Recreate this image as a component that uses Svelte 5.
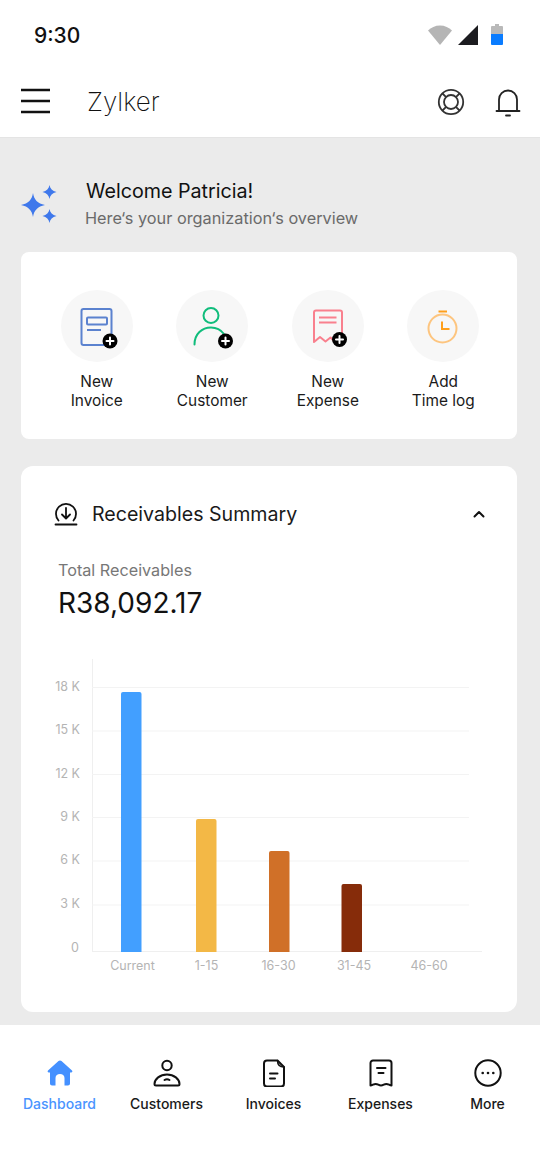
<script>
	const actions = [
		{ id: 'invoice', lines: ['New', 'Invoice'] },
		{ id: 'customer', lines: ['New', 'Customer'] },
		{ id: 'expense', lines: ['New', 'Expense'] },
		{ id: 'time', lines: ['Add', 'Time log'] }
	];

	const ticks = [
		{ label: '18 K', y: 687.5 },
		{ label: '15 K', y: 731 },
		{ label: '12 K', y: 774.5 },
		{ label: '9 K', y: 817.5 },
		{ label: '6 K', y: 861 },
		{ label: '3 K', y: 905 }
	];

	const bars = [
		{ label: 'Current', x: 121, top: 692, color: '#429fff', tx: 132.5 },
		{ label: '1-15', x: 196, top: 819, color: '#f3b846', tx: 206.5 },
		{ label: '16-30', x: 269, top: 851, color: '#d07028', tx: 278.5 },
		{ label: '31-45', x: 341.5, top: 884, color: '#862c0a', tx: 354 },
		{ label: '46-60', x: 0, top: 0, color: '', tx: 429 }
	];

	const tabs = [
		{ id: 'dashboard', label: 'Dashboard' },
		{ id: 'customers', label: 'Customers' },
		{ id: 'invoices', label: 'Invoices' },
		{ id: 'expenses', label: 'Expenses' },
		{ id: 'more', label: 'More' }
	];
</script>

{#snippet plus(cx, cy)}
	<circle cx={cx} cy={cy} r="7.5" fill="#000" />
	<path d="M{cx - 3.5} {cy}h7M{cx} {cy - 3.5}v7" stroke="#fff" stroke-width="2" stroke-linecap="round" fill="none" />
{/snippet}

<div class="page">
	<div class="status">
		<span class="time">9:30</span>
		<div class="status-icons">
			<svg width="26" height="22" viewBox="0 0 26 22"><path d="M1 6.500C4 3.500 8.200 1.500 13 1.500s9 2 12 5L13 21z" fill="#b5b5b5" /></svg>
			<svg width="22" height="22" viewBox="0 0 22 22"><path d="M21 1v20H1z" fill="#1c1c20" /></svg>
			<svg width="12" height="22" viewBox="0 0 12 22"><path d="M4 0h4v2h3a1 1 0 0 1 1 1v7H0V3a1 1 0 0 1 1-1h3z" fill="#b9b9b9" /><path d="M0 10h12v10a1 1 0 0 1-1 1H1a1 1 0 0 1-1-1z" fill="#0a7cff" /></svg>
		</div>
	</div>

	<header class="topbar">
		<svg class="burger" width="30" height="26" viewBox="0 0 30 26"><path d="M0 2h29M0 13h29M0 24h29" stroke="#111" stroke-width="2.400" fill="none" /></svg>
		<span class="brand">Zylker</span>
		<div class="top-actions">
			<svg width="28" height="28" viewBox="0 0 28 28" fill="none" stroke="#333" stroke-width="1.800">
				<circle cx="14" cy="14" r="12.200" />
				<circle cx="14" cy="14" r="7" />
				<path d="M5.500 5.500l3.600 3.600M22.500 5.500l-3.600 3.600M5.500 22.500l3.600-3.600M22.500 22.500l-3.600-3.600" />
			</svg>
			<svg width="26" height="30" viewBox="0 0 26 30" fill="none" stroke="#222" stroke-width="1.800" stroke-linecap="round">
				<path d="M4 23V12.500a9 9 0 0 1 18 0V23M1.500 24h23" />
				<path d="M11 28.500h4" />
			</svg>
		</div>
	</header>

	<main class="content">
		<section class="welcome">
			<svg width="36" height="40" viewBox="0 0 36 40" fill="#3f78eb">
				<path d="M12 8c1 6.500 4.500 10.500 12 12-7.500 1.500-11 5.500-12 12-1-6.500-4.500-10.500-12-12 7.500-1.500 11-5.500 12-12z" />
				<path d="M28.500 0c.6 3.800 2.800 6.100 7 7-4.200.9-6.400 3.200-7 7-.6-3.800-2.800-6.100-7-7 4.200-.9 6.400-3.200 7-7z" />
				<path d="M28.500 24c.6 3.800 2.800 6.100 7 7-4.200.9-6.400 3.200-7 7-.6-3.800-2.800-6.100-7-7 4.200-.9 6.400-3.200 7-7z" />
			</svg>
			<div class="welcome-text">
				<h1>Welcome Patricia!</h1>
				<p>Here‘s your organization‘s overview</p>
			</div>
		</section>

		<section class="card actions">
			{#each actions as action}
				<div class="action">
					<div class="bubble">
						<svg width="72" height="72" viewBox="0 0 72 72" fill="none" stroke-width="2">
							{#if action.id === 'invoice'}
								<rect x="20.500" y="19" width="30" height="36" rx="2" stroke="#5b82cf" />
								<rect x="26" y="27.500" width="20" height="7" rx="1" stroke="#5b82cf" />
								<path d="M26 40h14" stroke="#5b82cf" />
								{@render plus(49, 51)}
							{:else if action.id === 'customer'}
								<circle cx="35" cy="25.500" r="7.500" stroke="#10bd7c" />
								<path d="M18.500 54.500C18.500 44 26 37.500 35 37.500c6 0 10 2.500 13 6.500" stroke="#10bd7c" stroke-linecap="round" />
								{@render plus(49.500, 51)}
							{:else if action.id === 'expense'}
								<path d="M22 52V22.500a2 2 0 0 1 2-2h24a2 2 0 0 1 2 2V45M22 52l6-5 5.500 4.500 5-4 3 3" stroke="#f9808e" stroke-linecap="round" stroke-linejoin="round" />
								<path d="M27 27.500h17.500M27 32.500h17.500" stroke="#f9808e" />
								{@render plus(47.500, 49.500)}
							{:else}
								<circle cx="35.500" cy="38.500" r="14" stroke="#fdc57f" />
								<path d="M31.500 21.500h8.500" stroke="#ff9f1a" />
								<path d="M35 31.500v7.500h7.500" stroke="#ff9f1a" />
							{/if}
						</svg>
					</div>
					<div class="action-label">{action.lines[0]}<br />{action.lines[1]}</div>
				</div>
			{/each}
		</section>

		<section class="card summary">
			<div class="summary-head">
				<svg width="24" height="24" viewBox="0 0 24 24" fill="none" stroke="#111" stroke-width="1.800" stroke-linecap="round" stroke-linejoin="round">
					<path d="M4.500 18.500a10 10 0 1 1 15 0" />
					<path d="M1.500 22.500h21" />
					<path d="M12 6v10M8 12.500l4 4 4-4" />
				</svg>
				<h2>Receivables Summary</h2>
				<svg class="chev" width="14" height="10" viewBox="0 0 14 10" fill="none" stroke="#111" stroke-width="2" stroke-linecap="round" stroke-linejoin="round"><path d="M2.500 7.500L7 3l4.500 4.500" /></svg>
			</div>
			<div class="total-label">Total Receivables</div>
			<div class="total">R38,092.17</div>
			<svg class="chart" width="496" height="330" viewBox="21 650 496 330">
				<path d="M92.500 659V952M92 951.500H482" stroke="#efefef" fill="none" />
				{#each ticks as t}
					<line x1="92" x2="469" y1={t.y} y2={t.y} stroke="#f3f3f3" />
					<text x="80" y={t.y + 3} text-anchor="end">{t.label}</text>
				{/each}
				<text x="79" y="951.500" text-anchor="end">0</text>
				{#each bars as b}
					{#if b.color}
						<path d="M{b.x} 952V{b.top + 2}a2 2 0 0 1 2-2h16.500a2 2 0 0 1 2 2V952z" fill={b.color} />
					{/if}
					<text x={b.tx} y="970" text-anchor="middle">{b.label}</text>
				{/each}
			</svg>
		</section>
	</main>

	<nav class="tabs">
		{#each tabs as tab}
			<div class="tab" class:active={tab.id === 'dashboard'}>
				<svg width="28" height="28" viewBox="0 0 28 28" fill="none" stroke="#111" stroke-width="2" stroke-linecap="round" stroke-linejoin="round">
					{#if tab.id === 'dashboard'}
						<path d="M14 1.500c.6 0 1.100.2 1.500.6l10.500 9.400c.8.800.3 1.900-.8 1.900H24v11c0 1.100-.9 2-2 2h-3.500v-7.500c0-2.500-2-4-4.500-4s-4.500 1.500-4.500 4v7.500H6c-1.100 0-2-.9-2-2v-11H2.800c-1.100 0-1.600-1.100-.8-1.900L12.500 2.100c.4-.4.900-.6 1.500-.6z" fill="#4490ff" stroke="none" />
					{:else if tab.id === 'customers'}
						<circle cx="14" cy="6.500" r="4.700" />
						<path d="M3 26.500h22c1 0 1.500-.7 1.500-1.500 0-5-5.500-9.500-12.500-9.500S1.500 20 1.500 25c0 .8.500 1.500 1.500 1.500z" />
						<path d="M11.500 21c1.500-1 3.500-1 5 0" />
					{:else if tab.id === 'invoices'}
						<path d="M17.500 1.500H7a3 3 0 0 0-3 3v20a3 3 0 0 0 3 3h14a3 3 0 0 0 3-3V8z" />
						<path d="M17.500 1.500c0 4 2.500 6.500 6.500 6.500" stroke-width="1.500" />
						<path d="M10 14.500h7.500M10 19.500h5" />
					{:else if tab.id === 'expenses'}
						<path d="M6 1.500h16a2.500 2.500 0 0 1 2.500 2.500v22.500c-2 0-3-1.600-5.200-1.600s-3 1.600-5.300 1.600-3.100-1.600-5.300-1.600-3.200 1.600-5.200 1.600V4A2.500 2.500 0 0 1 6 1.500z" />
						<path d="M10 9h8.500M11.500 14h5" />
					{:else}
						<circle cx="14" cy="14" r="12.700" />
						<circle cx="8.700" cy="14" r="1.300" fill="#111" stroke="none" />
						<circle cx="14" cy="14" r="1.300" fill="#111" stroke="none" />
						<circle cx="19.300" cy="14" r="1.300" fill="#111" stroke="none" />
					{/if}
				</svg>
				<span>{tab.label}</span>
			</div>
		{/each}
	</nav>
</div>

<style>
	:global(body) {
		margin: 0;
		background: #fff;
	}

	.page {
		display: flex;
		flex-direction: column;
		height: 1172px;
		font-family: Inter, 'Noto Sans', sans-serif;
		color: #111;
		overflow: hidden;
	}

	.status {
		display: flex;
		align-items: center;
		justify-content: space-between;
		height: 70px;
		padding: 0 37px 0 34px;
		box-sizing: border-box;
	}

	.time {
		font-size: 21px;
		font-weight: 500;
	}

	.status-icons {
		display: flex;
		align-items: center;
		gap: 4px;
	}

	.status-icons svg:last-child {
		margin-left: 8px;
	}

	.topbar {
		display: flex;
		align-items: center;
		height: 68px;
		padding: 0 19px 5px 21px;
		box-sizing: border-box;
		border-bottom: 1px solid #e4e4e4;
	}

	.brand {
		margin-left: 36px;
		font-size: 26px;
		font-weight: 200;
		color: #111;
	}

	.top-actions {
		display: flex;
		align-items: center;
		gap: 30px;
		margin-left: auto;
		padding-top: 2px;
	}

	.content {
		flex: 1;
		background: #ebebeb;
		padding: 40px 23px 0 21px;
	}

	.welcome {
		display: flex;
		align-items: center;
		gap: 29px;
		height: 50px;
	}

	.welcome svg {
		margin-top: 3px;
		flex-shrink: 0;
	}

	h1 {
		margin: 0;
		font-size: 19.700px;
		font-weight: 400;
		line-height: 24px;
		color: #111;
	}

	.welcome-text p {
		margin: 5px 0 0 -1px;
		font-size: 16.300px;
		line-height: 20px;
		color: #6a6a6a;
	}

	.card {
		background: #fff;
	}

	.actions {
		display: grid;
		grid-template-columns: repeat(4, 1fr);
		margin-top: 24px;
		height: 187px;
		box-sizing: border-box;
		padding: 38px 16px 0 18px;
		border-radius: 8px;
	}

	.action {
		display: flex;
		flex-direction: column;
		align-items: center;
	}

	.bubble {
		width: 72px;
		height: 72px;
		border-radius: 50%;
		background: #f7f7f7;
	}

	.bubble svg {
		display: block;
	}

	.action-label {
		margin-top: 11px;
		font-size: 15.400px;
		line-height: 18.500px;
		text-align: center;
		color: #1a1a1a;
	}

	.summary {
		margin-top: 27px;
		height: 546px;
		border-radius: 12px;
	}

	.summary-head {
		display: flex;
		align-items: center;
		height: 95px;
		padding: 0 31px 0 33px;
		box-sizing: border-box;
	}

	h2 {
		margin: 0 0 0 14px;
		font-size: 19.600px;
		font-weight: 400;
		color: #1a1a1a;
	}

	.chev {
		margin-left: auto;
	}

	.total-label {
		margin: -1px 0 0 37px;
		font-size: 16.200px;
		line-height: 20px;
		color: #777;
	}

	.total {
		margin: 5px 0 0 37px;
		font-size: 28px;
		line-height: 36px;
		color: #111;
	}

	.chart {
		display: block;
		margin-top: 29px;
	}

	.chart text {
		font-size: 12.500px;
		fill: #b4b4b4;
	}

	.tabs {
		display: grid;
		grid-template-columns: repeat(5, 107px);
		height: 147px;
		padding: 34px 0 0 6px;
		box-sizing: border-box;
		background: #fff;
	}

	.tab {
		display: flex;
		flex-direction: column;
		align-items: center;
		font-size: 14px;
		font-weight: 500;
		color: #1a1a1a;
	}

	.tab span {
		margin-top: 8px;
	}

	.tab.active {
		color: #4a94ff;
	}
</style>
